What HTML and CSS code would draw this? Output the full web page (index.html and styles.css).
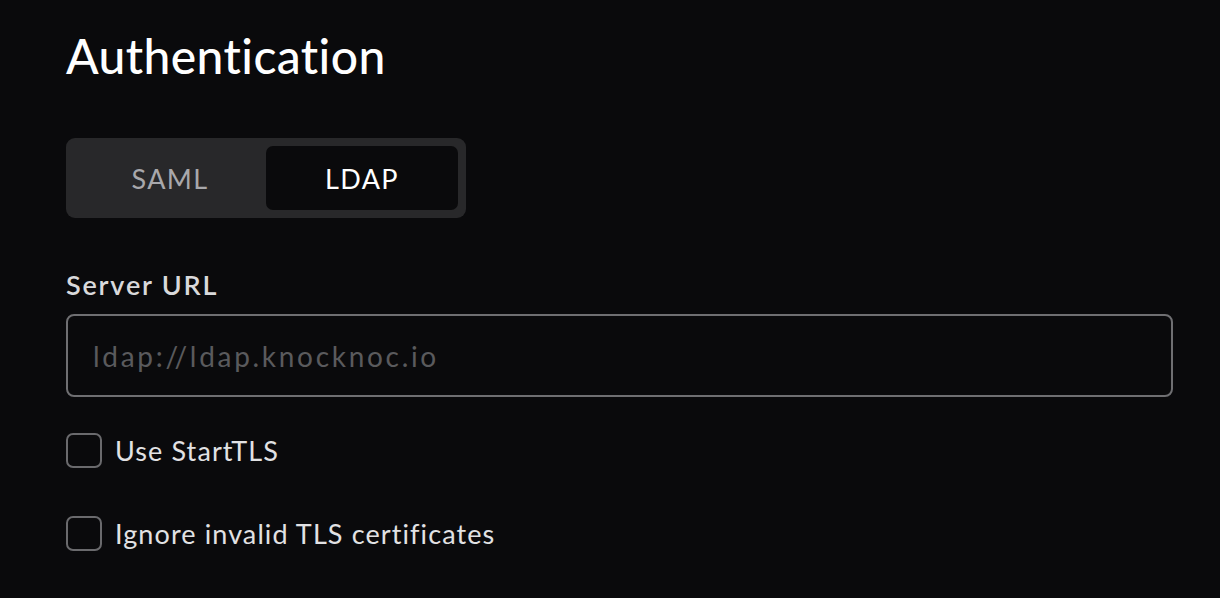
FILE: index.html
```html
<!DOCTYPE html>
<html lang="en">
<head>
<meta charset="utf-8">
<title>Authentication</title>
<link rel="stylesheet" href="styles.css">
</head>
<body>
<main class="page">
  <h1 class="title">Authentication</h1>
  <div class="segmented">
    <button class="seg-btn">SAML</button>
    <button class="seg-btn seg-active">LDAP</button>
  </div>
  <label class="field-label" for="url">Server URL</label>
  <input id="url" class="text-input" type="text" placeholder="ldap://ldap.knocknoc.io">
  <label class="check-row">
    <span class="check-box"></span>
    <span class="check-text">Use StartTLS</span>
  </label>
  <label class="check-row">
    <span class="check-box"></span>
    <span class="check-text">Ignore invalid TLS certificates</span>
  </label>
</main>
</body>
</html>
```
FILE: styles.css
```css
* { box-sizing: border-box; }
html, body {
  margin: 0;
  padding: 0;
  background: #0a0a0c;
  height: 100%;
}
body {
  font-family: Lato, "Open Sans", sans-serif;
  color: #e6e6e6;
}
.page {
  width: 1107px;
  margin-left: 66px;
  padding-top: 24px;
  display: flex;
  flex-direction: column;
  align-items: flex-start;
}
.title {
  margin: 0;
  font-size: 48px;
  line-height: 64px;
  font-weight: 500;
  color: #ffffff;
  letter-spacing: 0.4px;
}
.segmented {
  margin-top: 50px;
  width: 400px;
  height: 80px;
  padding: 8px;
  background: #28282a;
  border-radius: 9px;
  display: flex;
}
.seg-btn {
  flex: 1;
  border: none;
  background: transparent;
  font-family: inherit;
  font-size: 27px;
  letter-spacing: 1.4px;
  color: #a8a8ac;
  border-radius: 7px;
  padding: 0;
}
.seg-active {
  background: #0a0a0c;
  color: #ffffff;
}
.field-label {
  margin-top: 51px;
  font-size: 27px;
  line-height: 32px;
  font-weight: 600;
  letter-spacing: 1.8px;
  color: #d9d9db;
}
.text-input {
  margin-top: 13px;
  width: 100%;
  height: 83px;
  border: 2px solid #6f6f72;
  border-radius: 8px;
  background: transparent;
  padding: 0 25px;
  font-family: inherit;
  font-size: 28px;
  letter-spacing: 2.7px;
  color: #e6e6e6;
  outline: none;
}
.text-input::placeholder {
  color: #5a5a5d;
}
.check-row {
  display: flex;
  align-items: center;
  gap: 13px;
  height: 36px;
  margin-top: 35px;
}
.check-row + .check-row {
  margin-top: 47px;
}
.check-box {
  width: 36px;
  height: 35px;
  border: 2px solid #6a6a6d;
  border-radius: 7px;
}
.check-text {
  font-size: 27px;
  letter-spacing: 1.1px;
  color: #e2e2e4;
}
```
